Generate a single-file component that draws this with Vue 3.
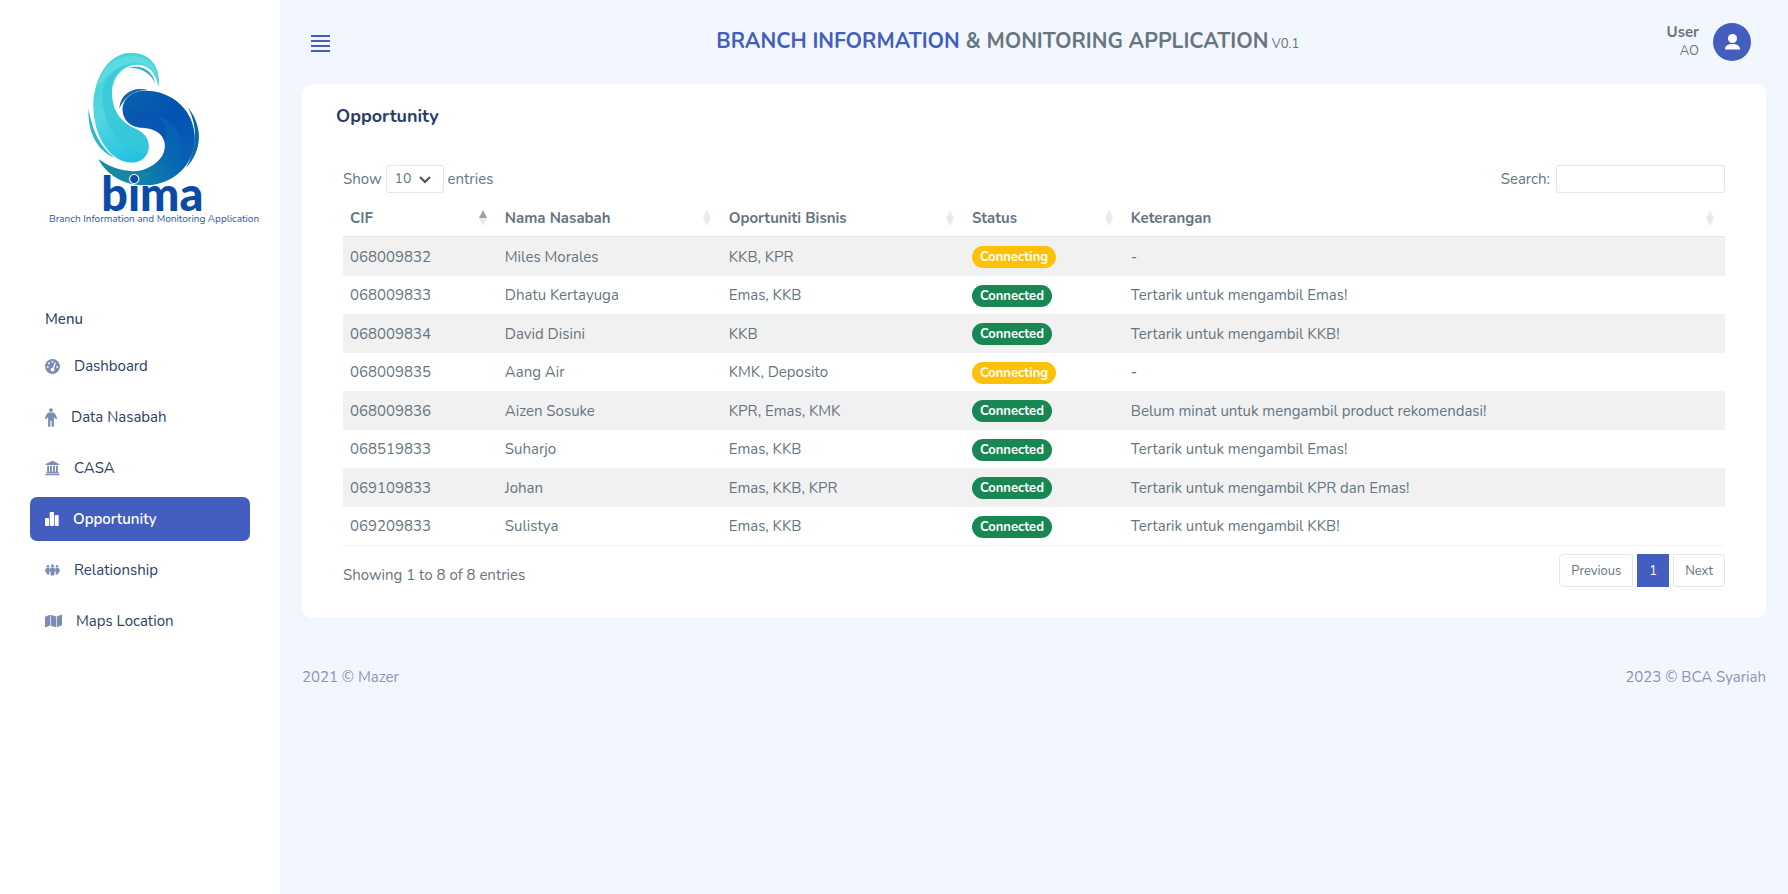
<script setup>
import { ref } from 'vue'

const menu = [
  { label: 'Dashboard', icon: 'gauge', width: 15 },
  { label: 'Data Nasabah', icon: 'person', width: 12 },
  { label: 'CASA', icon: 'bank', width: 15 },
  { label: 'Opportunity', icon: 'chart', width: 14 },
  { label: 'Relationship', icon: 'people', width: 15 },
  { label: 'Maps Location', icon: 'map', width: 17 },
]
const active = ref('Opportunity')

const columns = [
  { key: 'cif', label: 'CIF' },
  { key: 'name', label: 'Nama Nasabah' },
  { key: 'business', label: 'Oportuniti Bisnis' },
  { key: 'status', label: 'Status' },
  { key: 'note', label: 'Keterangan' },
]

const rows = [
  { cif: '068009832', name: 'Miles Morales', business: 'KKB, KPR', status: 'Connecting', note: '-' },
  { cif: '068009833', name: 'Dhatu Kertayuga', business: 'Emas, KKB', status: 'Connected', note: 'Tertarik untuk mengambil Emas!' },
  { cif: '068009834', name: 'David Disini', business: 'KKB', status: 'Connected', note: 'Tertarik untuk mengambil KKB!' },
  { cif: '068009835', name: 'Aang Air', business: 'KMK, Deposito', status: 'Connecting', note: '-' },
  { cif: '068009836', name: 'Aizen Sosuke', business: 'KPR, Emas, KMK', status: 'Connected', note: 'Belum minat untuk mengambil product rekomendasi!' },
  { cif: '068519833', name: 'Suharjo', business: 'Emas, KKB', status: 'Connected', note: 'Tertarik untuk mengambil Emas!' },
  { cif: '069109833', name: 'Johan', business: 'Emas, KKB, KPR', status: 'Connected', note: 'Tertarik untuk mengambil KPR dan Emas!' },
  { cif: '069209833', name: 'Sulistya', business: 'Emas, KKB', status: 'Connected', note: 'Tertarik untuk mengambil KKB!' },
]
</script>

<template>
  <div class="app">
    <aside class="sidebar">
      <a href="#" class="brand" aria-label="bima">
        <svg viewBox="0 0 720 630" class="logo">
          <defs>
            <linearGradient id="aqua" x1="0" y1="0" x2="0.5" y2="1">
              <stop offset="0" stop-color="#3fd0dc" />
              <stop offset="0.5" stop-color="#52d6df" />
              <stop offset="1" stop-color="#25c3e2" />
            </linearGradient>
            <linearGradient id="ocean" x1="1" y1="0.2" x2="0" y2="1">
              <stop offset="0" stop-color="#0556b4" />
              <stop offset="0.4" stop-color="#0668b2" />
              <stop offset="1" stop-color="#1b9aa5" />
            </linearGradient>
            <linearGradient id="deep" x1="0" y1="0" x2="1" y2="1">
              <stop offset="0" stop-color="#0a62b0" />
              <stop offset="0.5" stop-color="#0450b2" />
              <stop offset="1" stop-color="#0864b8" />
            </linearGradient>
          </defs>
          <path fill="url(#aqua)" d="M385 172C394 130 374 68 304 68C232 68 190 150 190 228C190 318 240 398 306 398C338 398 356 376 356 348C356 314 330 302 304 290C264 270 246 232 246 192C246 140 280 104 324 104C358 104 380 132 385 172Z" />
          <path fill="#35c7d8" opacity=".75" d="M246 192C240 160 256 120 292 106C252 104 222 142 218 194C214 270 258 352 352 372C362 346 354 320 328 302C272 282 246 240 246 192Z" />
          <path fill="#6ae0e6" opacity=".6" d="M202 170C216 108 260 74 316 78C350 84 372 104 380 132C352 92 300 88 262 116C232 138 216 158 202 170Z" />
          <path fill="#20afc6" d="M294 113C338 102 368 124 376 160C360 128 336 112 294 113Z" />
          <path fill="#2bb8c8" d="M176 236C172 304 200 360 254 384C212 352 186 304 176 236Z" />
          <path fill="url(#ocean)" d="M278 240C278 206 306 182 344 182C430 182 494 244 494 326C494 404 430 466 344 466C280 466 232 436 206 388C254 422 318 436 360 410C394 392 408 366 404 338C398 308 370 294 330 292C300 290 278 268 278 240Z" />
          <path fill="url(#deep)" d="M278 240C278 206 306 182 344 182C430 182 494 244 494 326C494 362 476 398 450 422C476 348 444 262 370 258C330 252 296 246 278 240Z" opacity=".85" />
          <path fill="#0b4fb0" opacity=".7" d="M278 240C280 270 304 292 334 294C372 294 400 310 405 340C420 290 390 252 344 248C318 246 294 244 278 240Z" />
          <path fill="#17889c" d="M206 388C250 426 322 444 372 420C350 450 300 458 262 444C236 430 218 412 206 388Z" opacity=".7" />
          <path fill="#1262ad" d="M268 236C270 194 306 168 354 180C312 178 284 200 268 236Z" />
          <path fill="#0a69a4" d="M474 232C520 290 518 362 468 414C502 352 504 292 474 232Z" />
          <text x="214" y="543" class="logo-name">bima</text>
          <text x="57" y="576" class="logo-tag">Branch Information and Monitoring Application</text>
        </svg>
      </a>

      <nav class="nav" aria-labelledby="menu-title">
        <h2 id="menu-title" class="nav-title">Menu</h2>
        <ul class="nav-list">
          <li v-for="item in menu" :key="item.label">
            <a href="#" class="nav-link" :class="{ active: active === item.label }" @click.prevent="active = item.label">
              <svg v-if="item.icon === 'gauge'" class="icon" :width="item.width" height="15" viewBox="0 0 16 16">
                <circle cx="8" cy="8" r="8" />
                <g class="cut">
                  <circle cx="8" cy="2.8" r="1" /><circle cx="4.2" cy="4.5" r="1" /><circle cx="2.9" cy="8.4" r="1" />
                  <circle cx="13" cy="8.4" r="1" /><circle cx="8" cy="11.3" r="2" />
                  <path d="M10.5 3.4l1.1.5-2.5 7.4-1.4-.5z" />
                </g>
              </svg>
              <svg v-else-if="item.icon === 'person'" class="icon" :width="item.width" height="19" viewBox="0 0 12 19">
                <circle cx="6" cy="2.100" r="1.900" />
                <path d="M4.200 4.600h3.600c1.100 0 1.900.6 2.400 1.500l1.700 3.500c.5 1.200-1.100 2-1.800 1L8.900 8.900V18c0 1.200-2.300 1.200-2.300 0v-5.200H5.400V18c0 1.200-2.300 1.200-2.300 0V8.900l-1.200 1.700c-.7 1-2.300.2-1.800-1l1.700-3.500c.5-.9 1.300-1.500 2.400-1.500z" />
              </svg>
              <svg v-else-if="item.icon === 'bank'" class="icon" :width="item.width" height="16" viewBox="0 0 16 16">
                <path d="M8 .3l7.200 3.300v1.300H.8V3.600zM2.300 5.700h2v6.200h1.100V5.700h2v6.200h1.200V5.700h2v6.200h1.100V5.700h2v6.200l.8.600v1H1.500v-1l.8-.6zM.5 14.200h15v1.500H.5z" />
              </svg>
              <svg v-else-if="item.icon === 'chart'" class="icon" :width="item.width" height="14" viewBox="0 0 14 14">
                <rect x="0" y="6" width="4" height="8" rx=".9" /><rect x="4.700" y="0" width="4.300" height="14" rx=".9" />
                <rect x="9.700" y="3" width="4" height="11" rx=".9" />
              </svg>
              <svg v-else-if="item.icon === 'people'" class="icon" :width="item.width" height="12" viewBox="0 0 15 12">
                <circle cx="2.900" cy="2.200" r="1.300" /><circle cx="7.500" cy="1.700" r="1.500" /><circle cx="12.100" cy="2.200" r="1.300" />
                <path d="M2 3.800h2.400l.4 2.500-.4 2v2.200H1.800V8.900C-.6 7.700-.4 5 2 3.800zM6.100 3.500h2.800c1.700 1.400 1.500 4 .4 5v3H5.700v-3c-1.100-1-1.300-3.600.4-5zM10.600 3.800H13c2.400 1.200 2.600 3.900.2 5.100v1.600h-2.600V8.300l-.4-2z" />
              </svg>
              <svg v-else class="icon" :width="item.width" height="14" viewBox="0 0 18 14">
                <path d="M0 2.500L5.400.4v11.400L.7 13.700c-.4.1-.7 0-.7-.4zM6.100.4l5.600 1.800v11.500L6.100 11.900zM12.400 2.200L17.200.3c.4-.1.800.1.800.4v10.700l-5.600 2.300z" />
              </svg>
              <span>{{ item.label }}</span>
            </a>
          </li>
        </ul>
      </nav>
    </aside>

    <div class="main">
      <header class="topbar">
        <button type="button" class="burger" aria-label="Toggle menu">
          <svg width="20" height="18" viewBox="0 0 20 18">
            <path d="M0 1h19M0 6h19M0 11h19M0 16h19" />
          </svg>
        </button>
        <h1 class="app-title">
          <span class="accent">BRANCH INFORMATION</span> &amp; MONITORING APPLICATION<small> V0.1</small>
        </h1>
        <div class="user">
          <div class="user-text">
            <strong>User</strong>
            <span>AO</span>
          </div>
          <svg class="avatar" viewBox="0 0 38 38">
            <circle cx="19" cy="19" r="19" fill="#435ebe" />
            <circle cx="19.500" cy="15.500" r="4.500" fill="#fff" />
            <path fill="#fff" d="M12 26.500c0-3.800 3-5.500 7.500-5.500s7.500 1.700 7.500 5.500z" />
          </svg>
        </div>
      </header>

      <main class="card">
        <h2 class="card-title">Opportunity</h2>
        <div class="card-body">
          <div class="controls">
            <div class="field">
              <label for="length">Show</label>
              <span class="select-box">
                <select id="length">
                  <option>10</option>
                  <option>25</option>
                  <option>50</option>
                </select>
                <svg class="chevron" width="12" height="8" viewBox="0 0 12 8"><path d="M1 1l5 5 5-5" /></svg>
              </span>
              <span>entries</span>
            </div>
            <div class="field">
              <label for="search">Search:</label>
              <input id="search" type="search" />
            </div>
          </div>

          <table class="table">
            <colgroup>
              <col v-for="c in columns" :key="c.key" :class="'col-' + c.key" />
            </colgroup>
            <thead>
              <tr>
                <th v-for="(c, i) in columns" :key="c.key" scope="col">
                  <div class="th-inner">
                    <span>{{ c.label }}</span>
                    <svg class="sort" width="8" height="16" viewBox="0 0 8 16">
                      <path d="M4 0l4 8H0z" :class="{ on: i === 0 }" />
                      <path d="M0 8h8l-4 8z" />
                    </svg>
                  </div>
                </th>
              </tr>
            </thead>
            <tbody>
              <tr v-for="row in rows" :key="row.cif">
                <td>{{ row.cif }}</td>
                <td>{{ row.name }}</td>
                <td>{{ row.business }}</td>
                <td><span class="badge" :class="row.status.toLowerCase()">{{ row.status }}</span></td>
                <td>{{ row.note }}</td>
              </tr>
            </tbody>
          </table>

          <div class="table-foot">
            <p>Showing 1 to 8 of 8 entries</p>
            <div class="pages">
              <button type="button" class="first">Previous</button>
              <button type="button" class="current">1</button>
              <button type="button" class="last">Next</button>
            </div>
          </div>
        </div>
      </main>

      <footer class="footer">
        <span>2021 © Mazer</span>
        <span>2023 © BCA Syariah</span>
      </footer>
    </div>
  </div>
</template>

<style>
body {
  background: #f2f7ff;
}
</style>

<style scoped>
.app {
  display: flex;
  min-height: 100vh;
  font-family: Nunito, Lato, "Open Sans", sans-serif;
  font-size: 15px;
  line-height: 22px;
  color: #66757f;
}
.app * {
  box-sizing: border-box;
}
h1,
h2,
p,
ul {
  margin: 0;
  padding: 0;
}
button,
input,
select {
  font: inherit;
  color: inherit;
}
.sidebar {
  flex: 0 0 280px;
  background: #fff;
  padding-top: 30px;
}
.brand {
  display: block;
  padding: 0 10px 0 30px;
}
.logo {
  display: block;
  width: 100%;
}
.logo-name {
  font-family: Lato, sans-serif;
  font-size: 140px;
  font-weight: 900;
  fill: #0b4aa5;
  stroke: #fff;
  stroke-width: 6px;
  paint-order: stroke;
}
.logo-tag {
  font-size: 30px;
  fill: #2c5aa8;
}
.nav {
  padding: 68px 30px 0;
}
.nav-title {
  font-size: 15px;
  line-height: 22px;
  font-weight: 500;
  color: #2e4066;
  padding-left: 15px;
  margin-bottom: 14px;
}
.nav-list {
  list-style: none;
  display: flex;
  flex-direction: column;
  gap: 7px;
}
.nav-link {
  display: flex;
  align-items: center;
  gap: 14px;
  height: 44px;
  padding: 0 15px;
  border-radius: 7px;
  color: #2e4066;
  text-decoration: none;
}
.icon {
  flex: none;
  fill: #7c8db5;
}
.cut {
  fill: #fff;
}
.nav-link.active {
  background: #435ebe;
  color: #fff;
  font-weight: 600;
}
.active .icon {
  fill: #fff;
}
.main {
  flex: 1;
  min-width: 0;
  padding: 0 22px;
}
.topbar {
  display: flex;
  align-items: center;
  justify-content: space-between;
  height: 84px;
  padding: 0 15px 0 9px;
}
.burger {
  display: flex;
  padding: 3px 0 0;
  border: 0;
  background: none;
}
.burger path {
  stroke: #435ebe;
  stroke-width: 2;
  fill: none;
}
.app-title {
  font-size: 21px;
  line-height: 26px;
  font-weight: 700;
  padding-left: 18px;
}
.app-title small {
  font-size: 13px;
  font-weight: 400;
}
.accent {
  color: #435ebe;
}
.user {
  display: flex;
  align-items: center;
  gap: 14px;
}
.user-text {
  display: flex;
  flex-direction: column;
  text-align: right;
  line-height: 19px;
}
.user-text span {
  font-size: 13px;
}
.avatar {
  width: 38px;
  height: 38px;
}
.card {
  background: #fff;
  border-radius: 10px;
  padding: 20px 41px 31px;
}
.card-title {
  font-size: 18px;
  line-height: 24px;
  font-weight: 700;
  color: #2a3d62;
  margin-left: -7px;
}
.card-body {
  padding-top: 37px;
}
.controls {
  display: flex;
  justify-content: space-between;
}
.field {
  display: flex;
  align-items: center;
  gap: 4px;
}
.select-box {
  position: relative;
  display: flex;
}
select {
  appearance: none;
  width: 58px;
  height: 28px;
  padding: 0 8px;
  border: 1px solid #dce7f1;
  border-radius: 3px;
  background: #fff;
  font-size: 14px;
}
.chevron {
  position: absolute;
  right: 13px;
  top: 11px;
  fill: none;
  stroke: #4a5257;
  stroke-width: 2;
  pointer-events: none;
}
input {
  width: 169px;
  height: 28px;
  border: 1px solid #dce7f1;
  border-radius: 3px;
  background: #fff;
  padding: 0 8px;
  margin-left: 2px;
}
.table {
  width: 100%;
  table-layout: fixed;
  border-collapse: separate;
  border-spacing: 0;
  margin-top: 7px;
  border-bottom: 1px solid #f0f1f2;
}
.col-cif {
  width: 11.2%;
}
.col-name {
  width: 16.2%;
}
.col-business {
  width: 17.6%;
}
.col-status {
  width: 11.5%;
}
th {
  height: 37px;
  padding: 0 11px 0 7px;
  text-align: left;
  font-weight: 700;
  border-bottom: 1px solid #e4e4e4;
}
.th-inner {
  display: flex;
  align-items: center;
  justify-content: space-between;
}
.sort {
  fill: #e8eaeb;
}
.on {
  fill: #98a1aa;
}
td {
  height: 38px;
  padding: 0 7px;
}
tbody tr:nth-child(odd) td {
  height: 39px;
  background: #f1f1f1;
}
.badge {
  display: inline-block;
  padding: 0 8px;
  border-radius: 11px;
  font-size: 13px;
  line-height: 22px;
  font-weight: 700;
  color: #fff;
  vertical-align: middle;
}
.connecting {
  background: #ffc107;
}
.connected {
  background: #198754;
}
.table-foot {
  display: flex;
  justify-content: space-between;
  padding-top: 8px;
}
.table-foot p {
  padding-top: 10px;
}
.pages {
  display: flex;
  gap: 4px;
}
.pages button {
  height: 33px;
  padding: 0 11px;
  border: 1px solid #e3e6e9;
  background: #fff;
  font-size: 13px;
}
.pages .first {
  border-radius: 4px 0 0 4px;
}
.pages .last {
  border-radius: 0 4px 4px 0;
}
.pages .current {
  background: #435ebe;
  border-color: #435ebe;
  color: #fff;
}
.footer {
  display: flex;
  justify-content: space-between;
  padding: 48px 0 24px;
  color: #8c94b5;
}
</style>
